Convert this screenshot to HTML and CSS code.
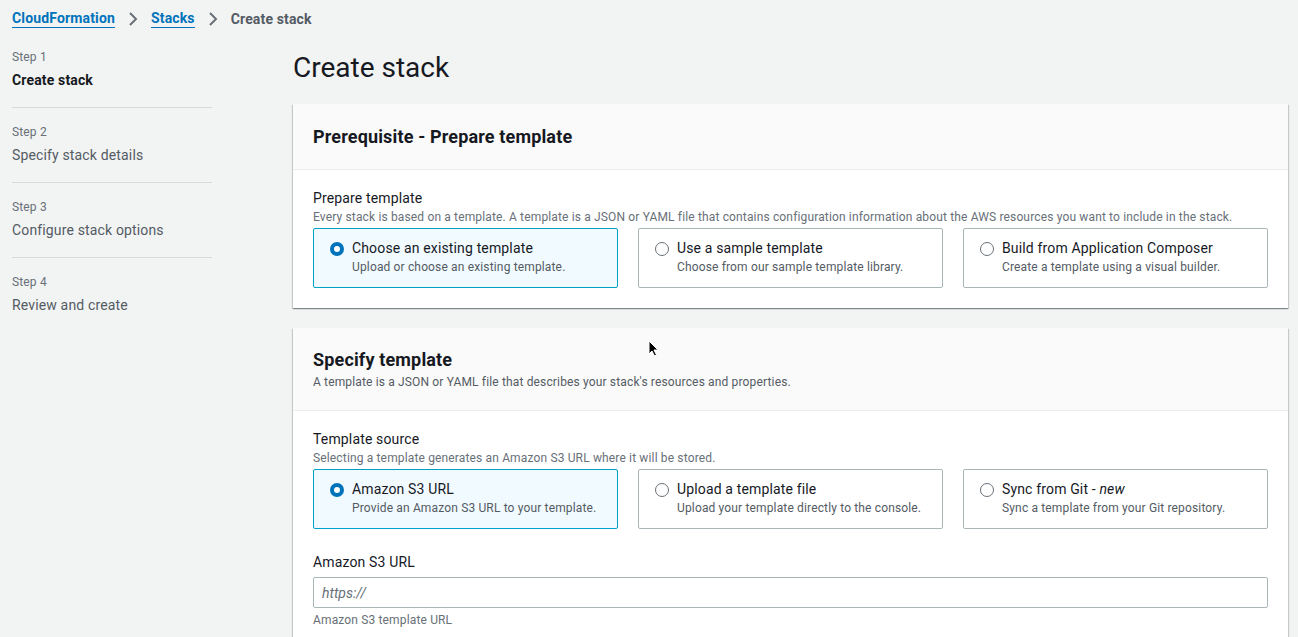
FILE: index.html
```html
<!DOCTYPE html>
<html lang="en">
<head>
<meta charset="utf-8">
<title>Create stack</title>
<link rel="stylesheet" href="styles.css">
</head>
<body>
<nav class="crumbs">
  <a class="crumb-link" href="#">CloudFormation</a>
  <svg class="chev" viewBox="0 0 16 16" width="16" height="16"><path d="M5 2l6 6-6 6" fill="none" stroke="#687078" stroke-width="2"/></svg>
  <a class="crumb-link" href="#">Stacks</a>
  <svg class="chev" viewBox="0 0 16 16" width="16" height="16"><path d="M5 2l6 6-6 6" fill="none" stroke="#687078" stroke-width="2"/></svg>
  <span class="crumb-current">Create stack</span>
</nav>
<div class="layout">
  <aside class="steps">
    <div class="step"><div class="step-num">Step 1</div><div class="step-title active">Create stack</div></div>
    <div class="step"><div class="step-num">Step 2</div><div class="step-title">Specify stack details</div></div>
    <div class="step"><div class="step-num">Step 3</div><div class="step-title">Configure stack options</div></div>
    <div class="step last"><div class="step-num">Step 4</div><div class="step-title">Review and create</div></div>
  </aside>
  <main class="main">
    <h1 class="page-title">Create stack</h1>
    <section class="panel">
      <header class="panel-head"><h2 class="panel-title">Prerequisite - Prepare template</h2></header>
      <div class="panel-body">
        <div class="field-label">Prepare template</div>
        <div class="field-desc">Every stack is based on a template. A template is a JSON or YAML file that contains configuration information about the AWS resources you want to include in the stack.</div>
        <div class="tiles">
          <div class="tile selected"><span class="radio on"></span><div><div class="tile-title">Choose an existing template</div><div class="tile-desc">Upload or choose an existing template.</div></div></div>
          <div class="tile"><span class="radio"></span><div><div class="tile-title">Use a sample template</div><div class="tile-desc">Choose from our sample template library.</div></div></div>
          <div class="tile"><span class="radio"></span><div><div class="tile-title">Build from Application Composer</div><div class="tile-desc">Create a template using a visual builder.</div></div></div>
        </div>
      </div>
    </section>
    <section class="panel">
      <header class="panel-head tall"><h2 class="panel-title">Specify template</h2><div class="panel-desc">A template is a JSON or YAML file that describes your stack's resources and properties.</div></header>
      <div class="panel-body">
        <div class="field-label">Template source</div>
        <div class="field-desc">Selecting a template generates an Amazon S3 URL where it will be stored.</div>
        <div class="tiles">
          <div class="tile selected"><span class="radio on"></span><div><div class="tile-title">Amazon S3 URL</div><div class="tile-desc">Provide an Amazon S3 URL to your template.</div></div></div>
          <div class="tile"><span class="radio"></span><div><div class="tile-title">Upload a template file</div><div class="tile-desc">Upload your template directly to the console.</div></div></div>
          <div class="tile"><span class="radio"></span><div><div class="tile-title">Sync from Git - <em>new</em></div><div class="tile-desc">Sync a template from your Git repository.</div></div></div>
        </div>
        <div class="field-label url-label">Amazon S3 URL</div>
        <input class="text-input" type="text" placeholder="https://">
        <div class="field-hint">Amazon S3 template URL</div>
      </div>
    </section>
  </main>
</div>
<svg class="cursor" width="12" height="18" viewBox="0 0 12 18"><path d="M1 1v13l3-3 2.5 5 2-1-2.5-5h4z" fill="#000" stroke="#fff" stroke-width="1"/></svg>
</body>
</html>
```
FILE: styles.css
```css
* { box-sizing: border-box; }
html, body { margin: 0; padding: 0; }
body {
  background: #f2f3f3;
  font-family: Roboto, "Noto Sans", sans-serif;
  color: #16191f;
  font-size: 14px;
  letter-spacing: 0.15px;
  width: 1298px;
  height: 637px;
  overflow: hidden;
  position: relative;
}
.crumbs {
  display: flex;
  align-items: center;
  gap: 8px;
  padding: 0 12px;
  height: 33px;
  margin-top: 2px;
  font-size: 14px;
}
.crumb-link {
  color: #0073bb;
  text-decoration: none;
  border-bottom: 1px solid #0073bb;
  font-weight: 700;
  line-height: 17px;
}
.chev { margin: 0 2px; }
.crumb-current { color: #545b64; font-weight: 700; }
.layout { display: flex; align-items: flex-start; margin-top: -2px; }
.steps { width: 200px; margin-left: 12px; }
.step { border-bottom: 1px solid #d5dbdb; padding: 16px 0 17px; }
.step.last { border-bottom: none; }
.step-num { font-size: 12px; color: #687078; line-height: 16px; }
.step-title { font-size: 14px; color: #545b64; line-height: 20px; margin-top: 5px; }
.step-title.active { color: #16191f; font-weight: 700; }
.main { margin-left: 81px; width: 995px; }
.page-title {
  font-size: 28px;
  font-weight: 400;
  letter-spacing: 0;
  margin: 17px 0 18px;
  line-height: 36px;
}
.panel {
  background: #fff;
  box-shadow: 0 1px 1px 0 rgba(0,28,36,.3), 1px 1px 1px 0 rgba(0,28,36,.15), -1px 1px 1px 0 rgba(0,28,36,.15);
  margin-bottom: 20px;
}
.panel-head {
  background: #fafafa;
  border-bottom: 1px solid #eaeded;
  height: 66px;
  padding: 21px 20px 0;
}
.panel-head.tall { height: 83px; padding-top: 20px; }
.panel-title { font-size: 18px; font-weight: 700; margin: 0; line-height: 24px; }
.panel-desc { font-size: 12px; color: #545b64; line-height: 16px; margin-top: 2px; }
.panel-body { padding: 19px 20px 20px; }
.field-label { font-size: 14px; line-height: 18px; }
.field-desc { font-size: 12px; color: #687078; line-height: 16px; margin-top: 2px; }
.tiles { display: grid; grid-template-columns: repeat(3, 1fr); gap: 20px; margin-top: 3px; }
.tile {
  display: flex;
  align-items: flex-start;
  gap: 8px;
  height: 60px;
  border: 1px solid #aab7b8;
  border-radius: 2px;
  padding: 10px 16px;
}
.tile.selected { background: #f1faff; border-color: #00a1c9; }
.radio {
  flex: none;
  width: 14px;
  height: 14px;
  border-radius: 50%;
  border: 1.5px solid #687078;
  margin-top: 3px;
  background: #fff;
}
.radio.on { border: 4px solid #0073bb; }
.tile-title { font-size: 14px; line-height: 19px; }
.tile-desc { font-size: 12px; color: #545b64; line-height: 16px; margin-top: 1px; }
.url-label { margin-top: 24px; }
.text-input {
  display: block;
  width: 100%;
  height: 31px;
  margin-top: 6px;
  border: 1px solid #aab7b8;
  border-radius: 2px;
  padding: 0 8px;
  font-family: inherit;
  font-size: 14px;
}
.text-input::placeholder { color: #687078; font-style: italic; }
.field-hint { font-size: 12px; color: #687078; margin-top: 4px; line-height: 16px; }
.cursor { position: absolute; left: 648px; top: 340px; }
```
